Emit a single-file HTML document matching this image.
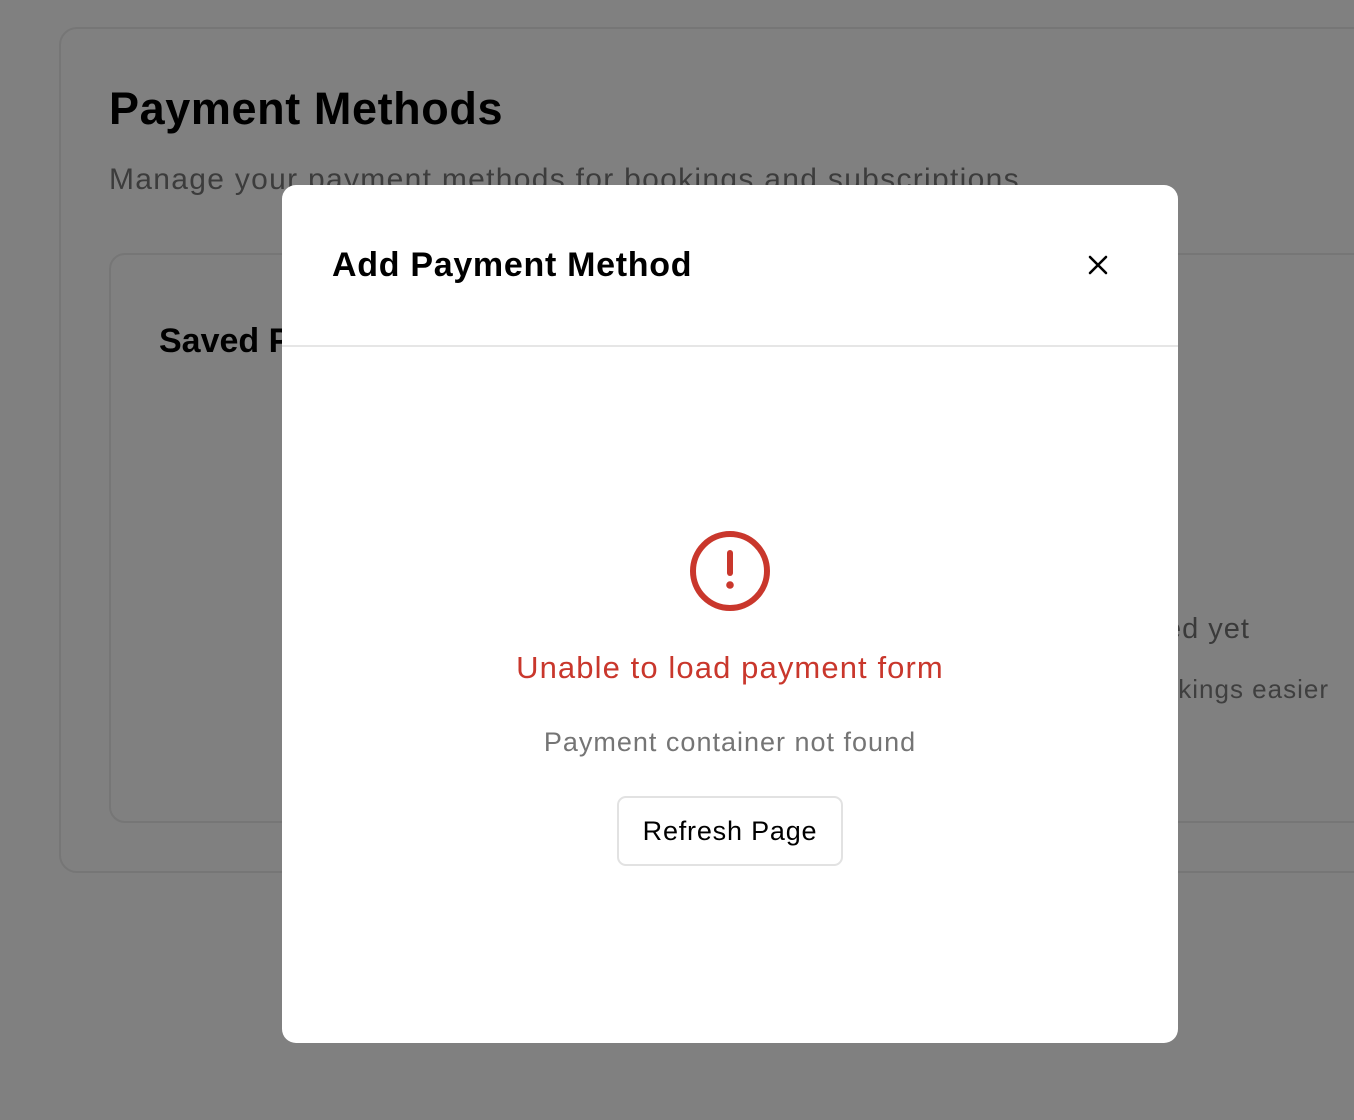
<!DOCTYPE html>
<html><head><meta charset="utf-8"><style>
*{margin:0;padding:0;box-sizing:border-box}
body{width:1354px;height:1120px;background:#808080;position:relative;overflow:hidden;font-family:"Liberation Sans",sans-serif}
.a{position:absolute;white-space:nowrap}
.outer{position:absolute;left:59px;top:27px;width:1400px;height:846px;border:2px solid #767676;border-radius:18px}
.inner{position:absolute;left:109px;top:253px;width:1400px;height:570px;border:2px solid #767676;border-radius:16px}
.modal{position:absolute;left:282px;top:185px;width:896px;height:858px;background:#fff;border-radius:14px;overflow:hidden}
</style></head><body>
<div class="outer"></div>
<div class="inner"></div>
<div class="a" style="left:109px;top:83px;font-size:45px;font-weight:bold;color:#000;letter-spacing:0.6px">Payment Methods</div>
<div class="a" style="left:109px;top:163px;font-size:30px;color:#3c3c3c;letter-spacing:1.3px">Manage your payment methods for bookings and subscriptions</div>
<div class="a" style="left:159px;top:322px;font-size:34px;font-weight:bold;color:#000">Saved Payment Methods</div>
<div class="a" style="right:104px;top:613px;font-size:29px;color:#3a3a3a;letter-spacing:1px">No payment methods added yet</div>
<div class="a" style="right:25px;top:674px;font-size:26px;color:#3f3f3f;letter-spacing:1px">Add a payment method to make bookings easier</div>
<div class="modal">
  <div class="a" style="left:50px;top:61px;font-size:34px;font-weight:bold;color:#000;letter-spacing:0.7px">Add Payment Method</div>
  <svg class="a" style="left:806px;top:70px" width="20" height="20" viewBox="0 0 20 20"><path d="M2 2L18 18M18 2L2 18" stroke="#000" stroke-width="2.6" stroke-linecap="round"/></svg>
  <div class="a" style="left:0;top:160px;width:896px;height:2px;background:#e6e6e6"></div>
  <svg class="a" style="left:406px;top:344px" width="84" height="84" viewBox="0 0 84 84"><circle cx="42" cy="42" r="37" fill="none" stroke="#c9372c" stroke-width="6"/><path d="M42 24V44" stroke="#c9372c" stroke-width="6" stroke-linecap="round"/><circle cx="42" cy="56" r="3.8" fill="#c9372c"/></svg>
  <div class="a" style="left:0;width:896px;text-align:center;top:465px;font-size:31px;color:#c9372c;letter-spacing:1.1px">Unable to load payment form</div>
  <div class="a" style="left:0;width:896px;text-align:center;top:542px;font-size:27px;color:#757575;letter-spacing:1px">Payment container not found</div>
  <div class="a" style="left:335px;top:611px;width:226px;height:70px;border:2px solid #e2e2e2;border-radius:9px;text-align:center;line-height:66px;font-size:27px;color:#000;letter-spacing:0.8px">Refresh Page</div>
</div>
</body></html>
